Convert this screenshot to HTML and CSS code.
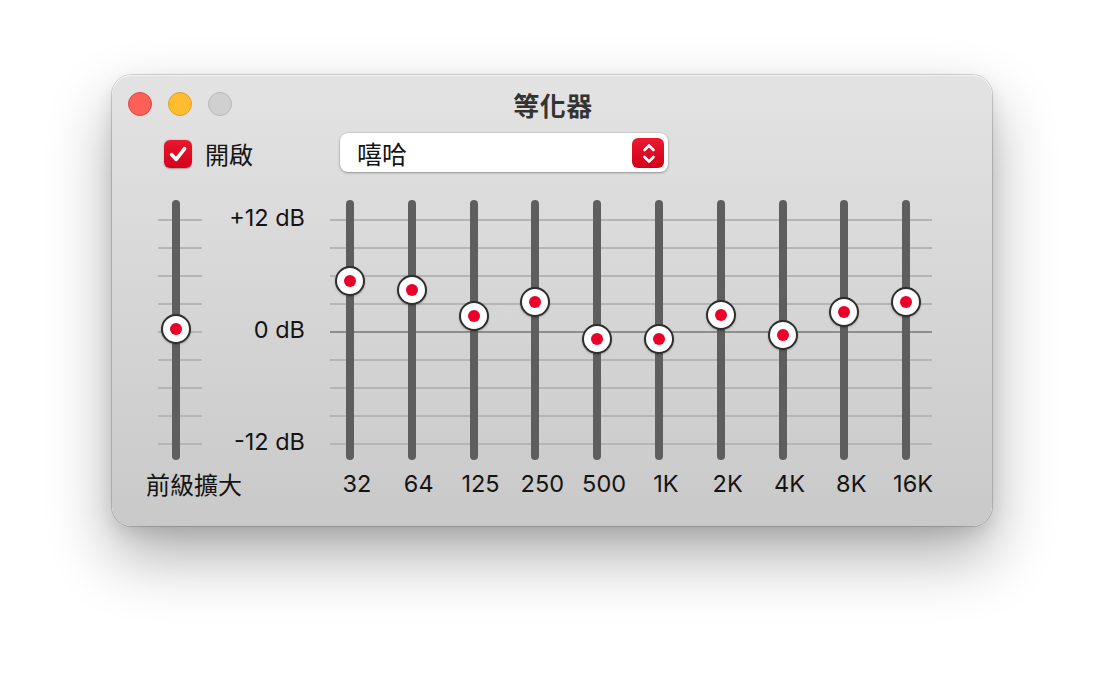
FILE: index.html
```html
<!DOCTYPE html>
<html lang="zh-Hant">
<head>
<meta charset="utf-8">
<title>等化器</title>
<link rel="stylesheet" href="styles.css">
</head>
<body>
<div class="window">
  <div class="titlebar">
    <div class="lights">
      <span class="light red"></span>
      <span class="light yellow"></span>
      <span class="light gray"></span>
    </div>
    <div class="title">等化器</div>
    <div></div>
  </div>

  <div class="controls">
    <div class="onoff">
      <span class="check">
        <svg viewBox="0 0 28 28" width="28" height="28"><path d="M7.6 14.6 L12.2 19.4 L20.6 8.6" fill="none" stroke="#fff" stroke-width="3.6" stroke-linecap="round" stroke-linejoin="round"/></svg>
      </span>
      <span class="on-label">開啟</span>
    </div>
    <div class="popup">
      <span class="popup-text">嘻哈</span>
      <span class="stepper">
        <svg viewBox="0 0 32 30" width="32" height="30"><path d="M12.5 12 L17 7.5 L21.5 12" fill="none" stroke="#fff" stroke-width="2.6" stroke-linecap="round" stroke-linejoin="round"/><path d="M12.5 19 L17 23.5 L21.5 19" fill="none" stroke="#fff" stroke-width="2.6" stroke-linecap="round" stroke-linejoin="round"/></svg>
      </span>
    </div>
  </div>

  <div class="eq">
    <div class="preamp">
      <div class="pre-area">
        <div class="track"></div>
        <div class="knob" style="top:114px"></div>
      </div>
      <div class="pre-label">前級擴大</div>
    </div>

    <div class="scale">
      <span>+12 dB</span>
      <span>0 dB</span>
      <span>-12 dB</span>
    </div>

    <div class="bands">
      <div class="band"><div class="band-area"><div class="track"></div><div class="knob" style="top:66px"></div></div><div class="freq">32</div></div>
      <div class="band"><div class="band-area"><div class="track"></div><div class="knob" style="top:74.5px"></div></div><div class="freq">64</div></div>
      <div class="band"><div class="band-area"><div class="track"></div><div class="knob" style="top:100.7px"></div></div><div class="freq">125</div></div>
      <div class="band"><div class="band-area"><div class="track"></div><div class="knob" style="top:86.7px"></div></div><div class="freq">250</div></div>
      <div class="band"><div class="band-area"><div class="track"></div><div class="knob" style="top:124.3px"></div></div><div class="freq">500</div></div>
      <div class="band"><div class="band-area"><div class="track"></div><div class="knob" style="top:124.3px"></div></div><div class="freq">1K</div></div>
      <div class="band"><div class="band-area"><div class="track"></div><div class="knob" style="top:100.3px"></div></div><div class="freq">2K</div></div>
      <div class="band"><div class="band-area"><div class="track"></div><div class="knob" style="top:120px"></div></div><div class="freq">4K</div></div>
      <div class="band"><div class="band-area"><div class="track"></div><div class="knob" style="top:96.7px"></div></div><div class="freq">8K</div></div>
      <div class="band"><div class="band-area"><div class="track"></div><div class="knob" style="top:86.7px"></div></div><div class="freq">16K</div></div>
    </div>
  </div>
</div>
</body>
</html>
```

FILE: styles.css
```css
html, body {
  margin: 0;
  padding: 0;
  background: #ffffff;
}

body {
  font-family: "Inter", "Noto Sans CJK TC", sans-serif;
  color: #141414;
  width: 1104px;
  height: 674px;
  overflow: hidden;
}

.window {
  box-sizing: border-box;
  width: 880px;
  height: 451px;
  margin: 75px 0 0 112px;
  border-radius: 20px;
  background: linear-gradient(to bottom, #e3e3e3 0%, #d6d6d6 50%, #c9c9c9 100%);
  box-shadow:
    0 0 0 1px rgba(0, 0, 0, 0.16),
    inset 0 1px 0 rgba(255, 255, 255, 0.6),
    0 30px 64px rgba(0, 0, 0, 0.32),
    0 8px 18px rgba(0, 0, 0, 0.10);
}

/* title bar */
.titlebar {
  height: 58px;
  display: grid;
  grid-template-columns: 1fr auto 1fr;
  align-items: center;
  padding: 0 16px;
}

.lights {
  display: flex;
  gap: 16px;
}

.light {
  box-sizing: border-box;
  width: 24px;
  height: 24px;
  border-radius: 50%;
}

.light.red { background: #fe5f57; border: 1px solid #e2463f; }
.light.yellow { background: #febc2e; border: 1px solid #df9f22; }
.light.gray { background: #d0d0d0; border: 1px solid #b9b9b9; }

.title {
  font-family: "Noto Sans CJK TC", sans-serif;
  font-size: 26px;
  font-weight: 700;
  color: #333333;
  letter-spacing: 0.5px;
  margin-left: 2px;
}

/* controls row */
.controls {
  height: 39px;
  display: flex;
  align-items: center;
  padding-left: 52px;
}

.onoff {
  width: 176px;
  display: flex;
  align-items: center;
  margin-top: 3px;
}

.check {
  width: 28px;
  height: 28px;
  border-radius: 6px;
  background: linear-gradient(to bottom, #e8182f, #d3001a);
  box-shadow: 0 0.5px 1.5px rgba(0, 0, 0, 0.3);
  display: block;
}

.check svg { display: block; }

.on-label {
  margin-left: 13px;
  font-family: "Noto Sans CJK TC", sans-serif;
  font-size: 24px;
  line-height: 28px;
}

.popup {
  box-sizing: border-box;
  width: 328px;
  height: 39px;
  background: #ffffff;
  border-radius: 8px;
  box-shadow: 0 0 0 0.5px rgba(0, 0, 0, 0.12), 0 1px 2.5px rgba(0, 0, 0, 0.3);
  display: flex;
  align-items: center;
  justify-content: space-between;
  padding: 0 4px 0 17px;
}

.popup-text {
  font-family: "Noto Sans CJK TC", sans-serif;
  font-size: 25px;
  line-height: 30px;
  color: #141414;
}

.stepper {
  width: 32px;
  height: 30px;
  border-radius: 6px;
  background: linear-gradient(to bottom, #ea1a31, #d2001a);
  display: block;
}

.stepper svg { display: block; }

/* equalizer */
.eq {
  display: flex;
  margin-top: 28px;
  padding-left: 46px;
}

.track {
  position: absolute;
  top: 0;
  width: 8px;
  height: 260px;
  border-radius: 4px;
  background: #5e5e5e;
}

.knob {
  position: absolute;
  box-sizing: border-box;
  width: 30px;
  height: 30px;
  border-radius: 50%;
  background: #ffffff;
  border: 2px solid #2e2e2e;
  box-shadow: 0 1px 2px rgba(0, 0, 0, 0.25);
}

.knob::after {
  content: "";
  position: absolute;
  left: 50%;
  top: 50%;
  width: 12px;
  height: 12px;
  margin: -6px 0 0 -6px;
  border-radius: 50%;
  background: #ea0029;
}

.preamp {
  width: 44px;
  display: flex;
  flex-direction: column;
}

.pre-area {
  position: relative;
  height: 260px;
  background:
    repeating-linear-gradient(to bottom, transparent 0, transparent 19px, #b5b5b5 19px, #b5b5b5 21px, transparent 21px, transparent 28px);
}

.pre-area .track { left: 14px; }
.pre-area .knob { left: 3px; }

.pre-label {
  margin: 10px 0 0 -12px;
  white-space: nowrap;
  font-family: "Noto Sans CJK TC", sans-serif;
  font-size: 24px;
  line-height: 28px;
}

.scale {
  box-sizing: border-box;
  width: 103px;
  height: 260px;
  display: flex;
  flex-direction: column;
  justify-content: space-between;
  align-items: flex-end;
  padding: 4px 0 4px;
  font-size: 23.5px;
  line-height: 28px;
}

.bands {
  display: flex;
  margin-left: 21px;
  background:
    linear-gradient(to bottom, transparent 131px, #8e8e8e 131px, #8e8e8e 133px, transparent 133px),
    repeating-linear-gradient(to bottom, transparent 0, transparent 19px, #b5b5b5 19px, #b5b5b5 21px, transparent 21px, transparent 28px);
  background-size: 602px 260px, 602px 260px;
  background-position: 4px 0, 4px 0;
  background-repeat: no-repeat;
}

.band {
  width: 61.8px;
  display: flex;
  flex-direction: column;
  align-items: center;
}

.band-area {
  position: relative;
  width: 100%;
  height: 260px;
}

.band-area .track { left: 20px; }
.band-area .knob { left: 9px; }

.freq {
  margin-top: 10px;
  font-size: 23.5px;
  line-height: 28px;
}
```
